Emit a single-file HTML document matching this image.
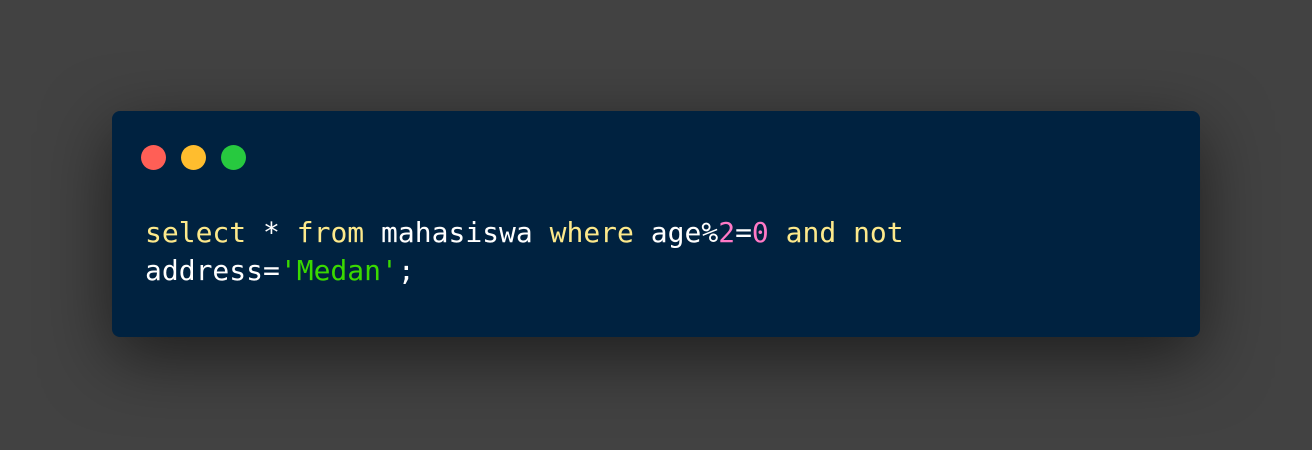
<!DOCTYPE html>
<html><head><style>
html,body{margin:0;padding:0;width:1312px;height:450px;overflow:hidden;background:#424242;}
.card{position:absolute;left:112px;top:111px;width:1088px;height:226px;background:#002240;border-radius:8px;box-shadow:0 20px 68px rgba(0,0,0,0.55);}
.dot{position:absolute;top:145px;width:25px;height:25px;border-radius:50%;}
pre{position:absolute;left:145px;top:214px;margin:0;font-family:"DejaVu Sans Mono","Liberation Mono",monospace;font-size:28px;line-height:38px;color:#fff;}
.k{color:#fde98b}.n{color:#ff79c6}.s{color:#3ad900}
</style></head><body>
<div class="card"></div>
<div class="dot" style="left:141px;background:#ff5f56"></div>
<div class="dot" style="left:181px;background:#ffbd2e"></div>
<div class="dot" style="left:221px;background:#27c93f"></div>
<pre><span class="k">select</span> * <span class="k">from</span> mahasiswa <span class="k">where</span> age%<span class="n">2</span>=<span class="n">0</span> <span class="k">and</span> <span class="k">not</span>
address=<span class="s">'Medan'</span>;</pre>
</body></html>
